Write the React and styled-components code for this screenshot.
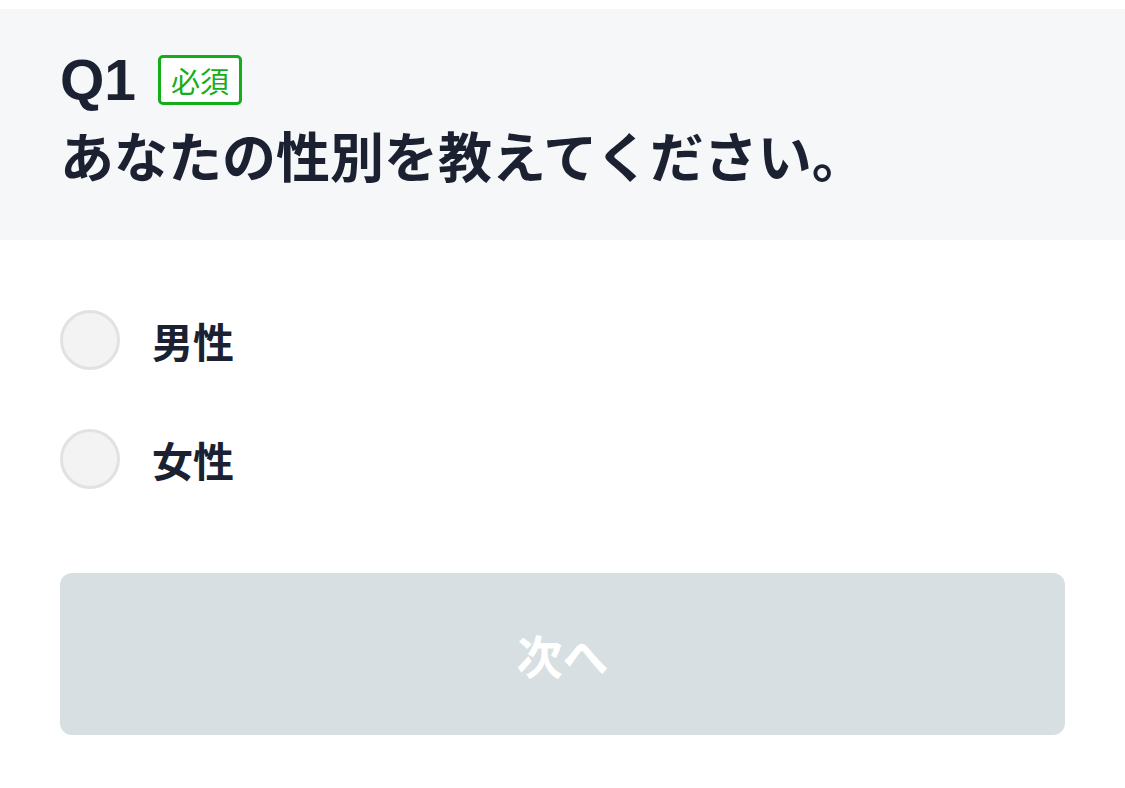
import React, { useState } from "react";
import styled, { createGlobalStyle } from "styled-components";

const GlobalStyle = createGlobalStyle`
  html, body {
    margin: 0;
    padding: 0;
    background: #ffffff;
  }
  body {
    font-family: "Liberation Sans", "Noto Sans CJK JP", sans-serif;
    color: #1b2131;
  }
`;

const Page = styled.div`
  padding-top: 9px;
`;

const QuestionHeader = styled.div`
  background: #f6f7f9;
  padding: 46px 60px 46px;
  box-sizing: border-box;
  height: 231px;

  .title_row {
    display: flex;
    align-items: center;
    gap: 22px;
    height: 50px;
  }

  .number {
    font-family: "Liberation Sans", Arial, sans-serif;
    font-size: 57px;
    font-weight: 700;
    line-height: 1;
  }

  .question {
    margin: 14px 0 0;
    font-family: "Noto Sans CJK JP", sans-serif;
    font-size: 54px;
    font-weight: 700;
    line-height: 72px;
    letter-spacing: 0;
    white-space: nowrap;
  }
`;

const RequiredBadge = styled.span`
  display: inline-flex;
  align-items: center;
  justify-content: center;
  box-sizing: border-box;
  width: 84px;
  height: 50px;
  border: 3px solid #16ad1a;
  border-radius: 5px;
  background: #ffffff;
  color: #16ad1a;
  font-family: "Noto Sans CJK JP", sans-serif;
  font-size: 29px;
  font-weight: 400;
  line-height: 1;
`;

const Options = styled.div`
  padding: 70px 60px 0;
  display: flex;
  flex-direction: column;
  gap: 59px;
`;

const OptionRow = styled.label`
  display: flex;
  align-items: center;
  gap: 32px;
  height: 60px;
  cursor: pointer;
`;

const RadioCircle = styled.span`
  width: 60px;
  height: 60px;
  flex: none;
  box-sizing: border-box;
  border-radius: 50%;
  border: 3px solid ${(p) => (p.checked ? "#16ad1a" : "#e2e2e2")};
  background: ${(p) => (p.checked ? "#16ad1a" : "#f3f3f3")};
`;

const OptionLabel = styled.span`
  font-family: "Noto Sans CJK JP", sans-serif;
  font-size: 41px;
  font-weight: 700;
  line-height: 1;
`;

const Footer = styled.div`
  padding: 84px 60px 0;
`;

const NextButton = styled.button`
  display: flex;
  align-items: center;
  justify-content: center;
  width: 100%;
  height: 162px;
  border: none;
  border-radius: 12px;
  background: ${(p) => (p.disabled ? "#d8dfe2" : "#16ad1a")};
  color: #ffffff;
  font-family: "Noto Sans CJK JP", sans-serif;
  font-size: 46px;
  font-weight: 700;
  cursor: ${(p) => (p.disabled ? "default" : "pointer")};
`;

const options = ["男性", "女性"];

export default function App() {
  const [selected, setSelected] = useState(null);

  return (
    <>
      <GlobalStyle />
      <Page>
        <QuestionHeader>
          <div className="title_row">
            <span className="number">Q1</span>
            <RequiredBadge>必須</RequiredBadge>
          </div>
          <h1 className="question">あなたの性別を教えてください。</h1>
        </QuestionHeader>

        <Options>
          {options.map((opt) => (
            <OptionRow key={opt} onClick={() => setSelected(opt)}>
              <RadioCircle checked={selected === opt} />
              <OptionLabel>{opt}</OptionLabel>
            </OptionRow>
          ))}
        </Options>

        <Footer>
          <NextButton disabled={selected === null}>次へ</NextButton>
        </Footer>
      </Page>
    </>
  );
}
